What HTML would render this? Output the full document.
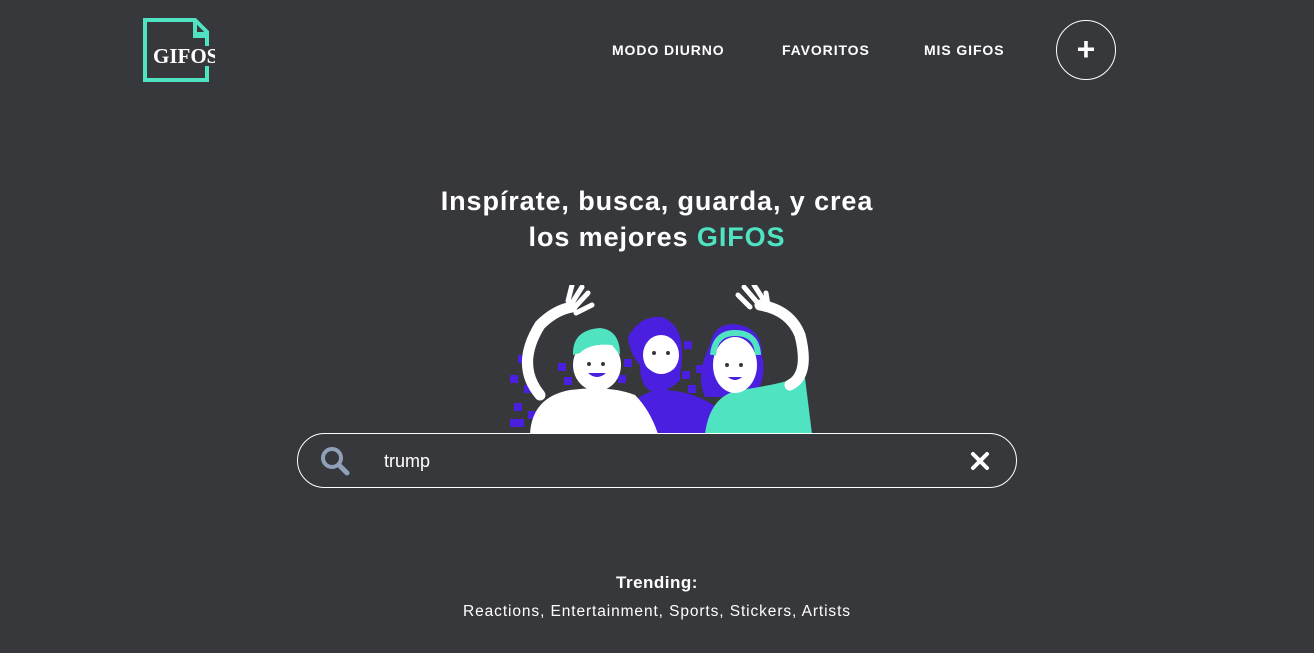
<!DOCTYPE html>
<html><head><meta charset="utf-8"><style>
*{margin:0;padding:0;box-sizing:border-box}
body{width:1314px;height:653px;background:#37383c;font-family:"Liberation Sans",sans-serif;color:#fff;position:relative;overflow:hidden}
.nav a{position:absolute;top:42px;font-size:14px;font-weight:bold;color:#fff;text-decoration:none;letter-spacing:0.9px}
.plus{position:absolute;left:1056px;top:20px;width:60px;height:60px;border:1px solid #fff;border-radius:50%;text-align:center;line-height:56px;font-size:32px;font-weight:bold}
h1{position:absolute;left:0;width:1314px;top:183px;text-align:center;font-size:27px;line-height:36px;font-weight:bold;letter-spacing:0.9px}
h1 span{color:#50e3c2}
.search{position:absolute;left:297px;top:433px;width:720px;height:55px;border:1px solid #fff;border-radius:28px;background:#37383c}
.search .t{position:absolute;left:86px;top:17px;font-size:18px}
.tr{position:absolute;width:1314px;text-align:center;left:0}
</style></head><body>
<svg style="position:absolute;left:143px;top:18px" width="72" height="64" viewBox="0 0 72 64">
<path d="M2 2H52L64 14V62H2Z" fill="none" stroke="#50e3c2" stroke-width="4"/>
<rect x="50" y="2" width="4" height="16" fill="#50e3c2"/><rect x="50" y="14" width="14" height="6" fill="#50e3c2"/>
<rect x="62" y="28" width="10" height="20" fill="#37383c"/>
<text x="10" y="45" font-family="Liberation Serif,serif" font-weight="bold" font-size="21" fill="#fff">GIFOS</text>
</svg>
<div class="nav"><a style="left:612px">MODO DIURNO</a><a style="left:782px">FAVORITOS</a><a style="left:924px">MIS GIFOS</a></div>
<div class="plus">+</div>
<h1>Inspírate, busca, guarda, y crea<br>los mejores <span>GIFOS</span></h1>
<svg style="position:absolute;left:500px;top:285px" width="320" height="149" viewBox="0 0 320 149">
<g fill="#4a1fe0">
<rect x="18" y="70" width="8" height="8"/><rect x="10" y="90" width="8" height="8"/><rect x="24" y="100" width="8" height="8"/><rect x="14" y="118" width="8" height="8"/><rect x="10" y="134" width="14" height="8"/><rect x="28" y="126" width="8" height="8"/>
<rect x="58" y="78" width="8" height="8"/><rect x="64" y="92" width="8" height="8"/><rect x="110" y="78" width="8" height="8"/><rect x="118" y="90" width="8" height="8"/><rect x="124" y="74" width="8" height="8"/>
<rect x="184" y="56" width="8" height="8"/><rect x="182" y="86" width="8" height="8"/><rect x="188" y="100" width="8" height="8"/><rect x="196" y="80" width="8" height="8"/>
<path d="M210 60 Q215 35 240 40 Q262 45 262 70 Q268 100 250 112 L205 112 Q195 90 210 60Z"/>
<path d="M110 149 Q130 105 165 105 Q215 108 242 149Z"/>
<path d="M128 52 Q140 30 162 32 Q183 40 182 70 Q183 100 160 108 Q140 108 140 80 Q130 70 128 52Z"/>
</g>
<path d="M205 149 Q210 110 240 105 Q275 100 290 95 L305 93 L312 149Z" fill="#50e3c2"/>
<path d="M290 100 Q310 90 300 50 Q290 25 260 20" fill="none" stroke="#fff" stroke-width="11" stroke-linecap="round"/>
<path d="M250 22 L238 10 M256 16 L244 2 M263 14 L254 0 M268 20 L266 8" stroke="#fff" stroke-width="5" stroke-linecap="round"/>
<ellipse cx="235" cy="80" rx="22" ry="28" fill="#fff"/>
<path d="M213 70 Q215 48 235 48 Q257 48 258 70" fill="none" stroke="#50e3c2" stroke-width="6"/>
<ellipse cx="161" cy="70" rx="18" ry="20" fill="#fff"/>
<path d="M143 78 Q161 100 180 78 L180 95 Q161 115 143 95Z" fill="#4a1fe0"/>
<path d="M30 149 Q32 112 70 105 Q110 100 135 110 Q150 125 158 149Z" fill="#fff"/>
<path d="M40 110 Q15 80 40 40 Q55 25 72 22" fill="none" stroke="#fff" stroke-width="11" stroke-linecap="round"/>
<path d="M75 22 L88 8 M72 18 L82 2 M68 16 L72 0 M76 28 L92 20" stroke="#fff" stroke-width="5" stroke-linecap="round"/>
<ellipse cx="97" cy="80" rx="24" ry="26" fill="#fff"/>
<path d="M73 70 Q72 45 100 43 Q120 45 120 70 L112 60 Q90 58 80 68Z" fill="#50e3c2"/>
<path d="M88 88 Q97 96 106 88Z" fill="#4a1fe0"/>
<circle cx="89" cy="79" r="2" fill="#37383c"/><circle cx="103" cy="79" r="2" fill="#37383c"/>
<circle cx="154" cy="68" r="2" fill="#37383c"/><circle cx="168" cy="68" r="2" fill="#37383c"/>
<circle cx="227" cy="80" r="2" fill="#37383c"/><circle cx="241" cy="80" r="2" fill="#37383c"/>
<path d="M228 92 Q235 98 242 92Z" fill="#4a1fe0"/>
</svg>
<div class="search">
<svg style="position:absolute;left:22px;top:12px" width="30" height="30" viewBox="0 0 30 30"><circle cx="12" cy="12" r="9" fill="none" stroke="#8fa0b8" stroke-width="4"/><path d="M19 19L27 27" stroke="#8fa0b8" stroke-width="5" stroke-linecap="round"/></svg>
<div class="t">trump</div>
<svg style="position:absolute;left:672px;top:17px" width="20" height="20" viewBox="0 0 20 20"><path d="M3 3L17 17M17 3L3 17" stroke="#fff" stroke-width="4" stroke-linecap="round"/></svg>
</div>
<div class="tr" style="top:573px;font-size:17px;font-weight:bold;letter-spacing:0.5px">Trending:</div>
<div class="tr" style="top:603px;font-size:15.5px;letter-spacing:0.9px">Reactions, Entertainment, Sports, Stickers, Artists</div>
</body></html>
